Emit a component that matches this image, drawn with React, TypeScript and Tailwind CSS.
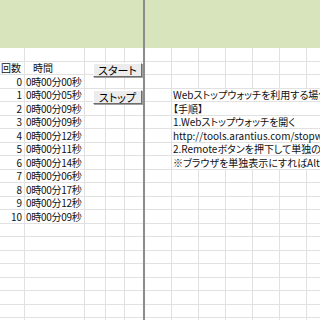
import React from "react";

const font = "font-['Noto_Sans_CJK_JP',sans-serif] [font-feature-settings:'palt']";

const times = [
  "0時00分00秒",
  "0時00分05秒",
  "0時00分09秒",
  "0時00分09秒",
  "0時00分12秒",
  "0時00分11秒",
  "0時00分14秒",
  "0時00分06秒",
  "0時00分17秒",
  "0時00分12秒",
  "0時00分09秒",
];

const notes: Record<number, string> = {
  3: "Webストップウォッチを利用する場合",
  4: "【手順】",
  5: "1.Webストップウォッチを開く",
  6: "http://tools.arantius.com/stopwatch",
  7: "2.Remoteボタンを押下して単独のウィンドウで表示",
  8: "※ブラウザを単独表示にすればAlt+Tabで切替可能",
};

const rows = Array.from({ length: 21 }, (_, i) => i);

function rowHeight(i: number) {
  return i % 2 === 0 ? "h-[14px]" : "h-[13px]";
}

function LeftRow({ i }: { i: number }) {
  const cell = "h-full border-r border-[#e1e1e1] flex items-center shrink-0";
  let a: React.ReactNode = null;
  let b: React.ReactNode = null;
  if (i === 1) {
    a = <span className="pl-[1px]">回数</span>;
    b = <span className="pl-[8px]">時間</span>;
  } else if (i >= 2 && i <= 12) {
    a = <span className="w-full text-right pr-[2px]">{i - 2}</span>;
    b = <span className="pl-[1px] tracking-[-0.3px]">{times[i - 2]}</span>;
  }
  return (
    <div className={`flex ${rowHeight(i)} border-b border-[#e1e1e1]`}>
      <div className={`${cell} w-[25px]`}>{a}</div>
      <div className={`${cell} w-[60px]`}>{b}</div>
      <div className={`${cell} w-[21px]`} />
      <div className={`${cell} w-[19px]`} />
      <div className="h-full w-[18px] shrink-0" />
    </div>
  );
}

function RightRow({ i }: { i: number }) {
  const cell = "h-full w-[27px] border-r border-[#e1e1e1] shrink-0";
  const note = notes[i];
  return (
    <div className={`flex ${rowHeight(i)} border-b border-[#e1e1e1]`}>
      <div className={`${cell} w-[26px]`} />
      {note ? (
        <div className="h-full flex items-center pl-[1px] whitespace-nowrap">{note}</div>
      ) : (
        <>
          <div className={cell} />
          <div className={cell} />
          <div className={cell} />
          <div className={cell} />
          <div className={cell} />
          <div className={cell} />
        </>
      )}
    </div>
  );
}

function SheetButton({ label }: { label: string }) {
  return (
    <div className="w-[49px] h-[14px] bg-[#ececec] border-t border-l border-white border-r border-b border-r-[#6e6e6e] border-b-[#6e6e6e] shadow-[1px_1px_0_#a0a0a0] flex items-center justify-center text-[11px] leading-none text-black">
      {label}
    </div>
  );
}

export default function App() {
  return (
    <div className={`w-[320px] h-[320px] overflow-hidden bg-white flex text-[10px] leading-none text-[#111] ${font}`}>
      {/* left pane */}
      <div className="relative w-[143px] shrink-0">
        <div className="h-[48px] bg-[#d8e4bc]" />
        {rows.map((i) => (
          <LeftRow key={i} i={i} />
        ))}
        <div className="absolute left-[93px] top-[63px]">
          <SheetButton label="スタート" />
        </div>
        <div className="absolute left-[93px] top-[90px]">
          <SheetButton label="ストップ" />
        </div>
      </div>
      {/* frozen pane divider */}
      <div className="w-[2px] shrink-0 bg-[#8c8c8c]" />
      {/* right pane */}
      <div className="flex-1 overflow-hidden">
        <div className="h-[48px] bg-[#d8e4bc]" />
        {rows.map((i) => (
          <RightRow key={i} i={i} />
        ))}
      </div>
    </div>
  );
}
